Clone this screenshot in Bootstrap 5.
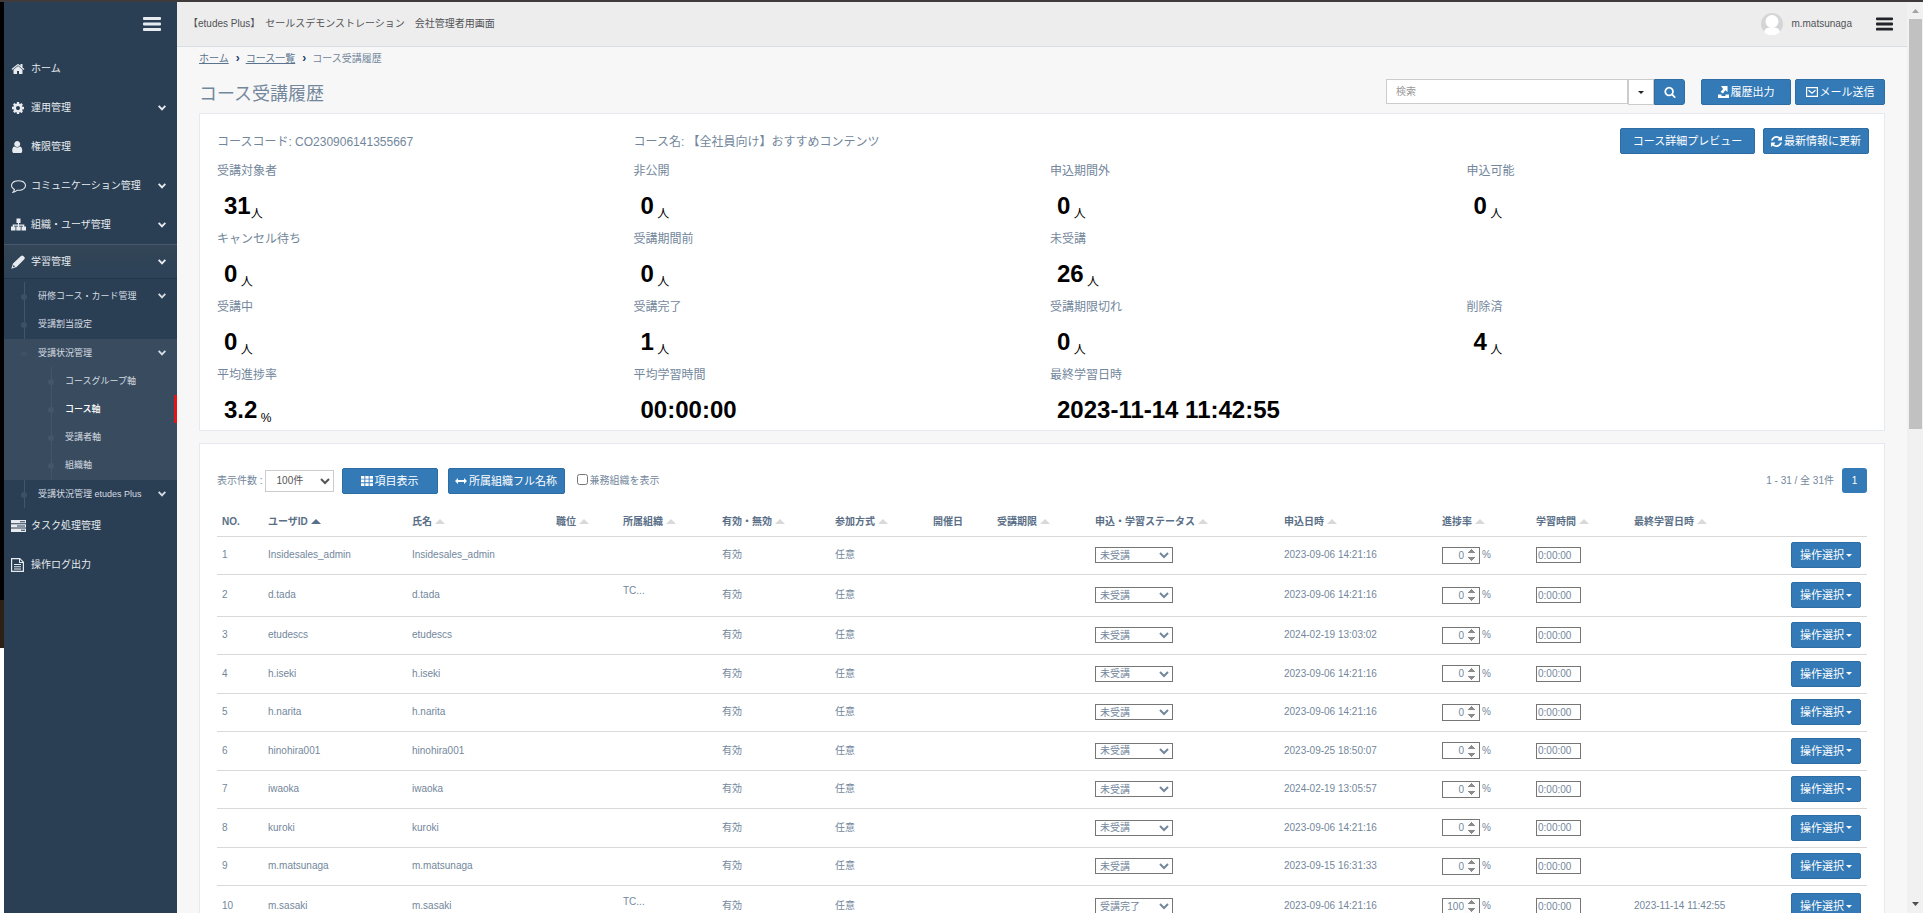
<!DOCTYPE html>
<html lang="ja">
<head>
<meta charset="utf-8">
<meta name="viewport" content="width=device-width, initial-scale=1">
<title>コース受講履歴</title>
<link href="https://cdn.jsdelivr.net/npm/bootstrap@5.3.0/dist/css/bootstrap.min.css" rel="stylesheet">
<style>
body{font-family:"Liberation Sans","Noto Sans CJK JP",sans-serif;font-size:10px;line-height:16px;color:#73879c;background:#f7f7f7;border-top:2px solid #3f3b3c}
svg{fill:currentColor;display:block;flex:none}
.edge{width:4px;background:#000}
.edge-brown{background:#2c1f16;margin-top:auto;height:48px}
.edge-rest{background:#fff;height:265px}
.sidebar{width:173px;background:#2a3f54;color:#e7ebef}
.sidebar a,.sidebar button{color:inherit;text-decoration:none}
.side-top{height:47px;padding:0 16px 0 0}
.side-item{height:39px;padding:0 11px 0 7px}
.side-item .ico{width:20px}
.side-item.active{height:33px;margin-top:1px;background:linear-gradient(#334556,#2c4257);box-shadow:0 -1px #47596b,0 1px #223548}
.sub{padding-top:4px;margin-bottom:-2px;font-size:9px;color:#d5dbe1;position:relative}
.sub::before,.sub2::before{content:"";position:absolute;width:1px;background:#425668;left:20px;top:4px;bottom:0}
.sub2::before{left:47px;top:28px;bottom:1px}
.sub-item{height:28px;padding:0 11px 0 34px;position:relative}
.sub-item::before{content:"";position:absolute;left:17px;top:12px;width:6px;height:6px;border-radius:50%;background:#3d5165}
.sub2{background:#394c5f;margin-top:1px;padding-bottom:1px;position:relative}
.sub2 .deep{padding-left:61px}
.sub2 .deep::before{left:44px;background:#43566a}
.sub2 .current{color:#fff;font-weight:500;border-right:3px solid #e11515}
.topbar{height:45px;background:#ededed;border-bottom:1px solid #d9dee4;color:#515356;padding:0 14px 0 11px}
.avatar{width:22px;height:22px}
.scrollcol{width:16px;background:#f1f1f1;padding:0 1px 0 2px}
.scrollcol .thumb{background:#c1c1c1;height:45%}
.content{padding:4px 22px 0 22px}
.crumbs a{color:#5a738e;text-decoration:underline}
.crumbs b{color:#1c3f6b;font-size:12px;line-height:14px;padding:0 6px 0 7px}
h1{font-size:18px;line-height:22px;margin:0;padding-top:4px;color:#73879c;font-weight:400}
.btn-main{--bs-btn-bg:#337ab7;--bs-btn-border-color:#2e6da4;--bs-btn-color:#fff;--bs-btn-hover-bg:#286090;--bs-btn-hover-color:#fff;--bs-btn-font-size:11px;--bs-btn-line-height:16px;--bs-btn-padding-y:4px;--bs-btn-padding-x:8px;--bs-btn-border-radius:2px;display:inline-flex;align-items:center;justify-content:center;gap:2px;white-space:nowrap}
.search-box{width:299px}
.search-box input{height:25px;border:1px solid #ccc;border-radius:0;font-size:10px;padding:0 9px;color:#555}
.search-box input::placeholder{color:#999}
.search-box .drop{width:26px;height:26px;background:#fff;border:1px solid #ccc;border-radius:0;padding:0}
.search-box .btn-main{width:31px;padding:0;height:26px;border-radius:0 3px 3px 0}
.caret{width:0;height:0;border:3px solid transparent;border-top-color:currentColor;border-bottom:0}
.w-action{width:90px}.w-preview{width:135px}.w-refresh{width:106px}.w-cols{width:96px}.w-full{width:117px}
.panel{background:#fff;border:1px solid #e6e9ed}
.summary{padding:14px 17px 0;font-size:12px}
.summary .row{--bs-gutter-x:16px}
.course-line{height:33px}
.course-text{padding-top:6px}
.course-tools{padding-right:6px}
.stat{height:68px}
.stat.closing{height:65px}
.stat dt{font-weight:400;line-height:20px;margin:0}
.stat dd{margin:0;padding:8px 0 0 7px;color:#000;line-height:34px}
.stat dd b{font-size:24px}
.stat sub{font-size:12px;bottom:-4px}
.list-panel{margin-top:12px;padding:23px 17px 0}
.tools{height:27px}
.tools select{width:69px;height:22px;margin:0 8px 0 2px;border:1px solid #ccc;background:#fff;color:#555;font-size:10px;padding:0 7px}
.tools .w-full{margin:0 8px 0 10px}
.tools input[type=checkbox]{width:11px;height:11px;margin:0 2px 2px 0}
.page-no{width:25px;height:25px;background:#337ab7;color:#fff;border-radius:3px;text-decoration:none}
.grid{table-layout:fixed;width:100%;margin-top:14px}
.grid th,.grid td{padding:0 5px;border-bottom:1px solid #d9d9d9;white-space:nowrap;vertical-align:middle}
.grid th{height:28px;color:#5a6f87}
.grid th a{color:inherit;text-decoration:none}
.grid th a::after{content:"";display:inline-block;border:5px solid transparent;border-top:0;border-bottom:5px solid #d9d9d9;margin-left:3px;vertical-align:1px}
.grid th a.asc::after{border-bottom-color:#5a6f87}
.grid tbody td{height:38px}
.grid tbody tr:nth-child(even) td{height:39px}
.grid tbody tr.tall td{height:42px}
.grid select,.grid input{border:1px solid #767676;border-radius:0;background:#fff;color:#73879c;font-size:10px;line-height:13px;display:block}
.grid select{width:78px;height:16px;padding:0}
.grid .rate{width:38px;height:17px;padding:0;text-align:right}
.grid .rate::-webkit-inner-spin-button{opacity:1;height:14px}
.grid .rate-cell{gap:2px}
.grid .time{width:45px;height:16px;padding:0 1px}
.grid .btn-main{width:70px}
</style>
</head>
<body class="vh-100 overflow-hidden">
<svg class="d-none">
<symbol id="chev" viewBox="0 0 8 6"><path d="M0 1.600 1.300.3 4 3l2.700-2.700L8 1.600 4 5.700z"/></symbol>
<symbol id="bars" viewBox="0 0 18 14"><path d="M1 0h16a1 1 0 0 1 1 1v1a1 1 0 0 1-1 1H1a1 1 0 0 1-1-1V1a1 1 0 0 1 1-1zM1 5.500h16a1 1 0 0 1 1 1v1a1 1 0 0 1-1 1H1a1 1 0 0 1-1-1v-1a1 1 0 0 1 1-1zM1 11h16a1 1 0 0 1 1 1v1a1 1 0 0 1-1 1H1a1 1 0 0 1-1-1v-1a1 1 0 0 1 1-1z"/></symbol>
</svg>
<div class="d-flex h-100">
  <div class="edge d-flex flex-column flex-shrink-0"><div class="edge-brown"></div><div class="edge-rest"></div></div>
  <nav class="sidebar flex-shrink-0" aria-label="メインメニュー">
    <div class="side-top d-flex align-items-center justify-content-end"><button class="btn p-0 pb-2 border-0" aria-label="メニュー"><svg class="mt-1" width="18" height="14"><use href="#bars"/></svg></button></div>
    <a href="#" class="side-item d-flex align-items-center"><span class="ico"><svg width="14" height="14" viewBox="0 0 1792 1792"><path d="M1472 992v480q0 26-19 45t-45 19h-384v-384h-256v384h-384q-26 0-45-19t-19-45v-480q0-1 .5-3t.5-3l575-474 575 474q1 2 1 6zm223-69l-62 74q-8 9-21 11h-3q-13 0-21-7l-692-577-692 577q-12 8-24 7-13-2-21-11l-62-74q-8-10-7-23.500t11-21.500l719-599q32-26 76-26t76 26l244 204v-195q0-14 9-23t23-9h192q14 0 23 9t9 23v408l219 182q10 8 11 21.500t-7 23.500z"/></svg></span>ホーム</a>
    <a href="#" class="side-item d-flex align-items-center"><span class="ico"><svg width="14" height="14" viewBox="0 0 1792 1792"><path d="M1152 896q0-106-75-181t-181-75-181 75-75 181 75 181 181 75 181-75 75-181zm512-109v222q0 12-8 23t-20 13l-185 28q-19 54-39 91 35 50 107 138 10 12 10 25t-9 23q-27 37-99 108t-94 71q-12 0-26-9l-138-108q-44 23-91 38-16 136-29 186-7 28-36 28h-222q-14 0-24.500-8.500t-11.500-21.500l-28-184q-49-16-90-37l-141 107q-10 9-25 9-14 0-25-11-126-114-165-168-7-10-7-23 0-12 8-23 15-21 51-66.500t54-70.500q-27-50-41-99l-183-27q-13-2-21-12.500t-8-23.500v-222q0-12 8-23t19-13l186-28q14-46 39-92-40-57-107-138-10-12-10-24 0-10 9-23 26-36 98.500-107.500t94.500-71.500q13 0 26 10l138 107q44-23 91-38 16-136 29-186 7-28 36-28h222q14 0 24.500 8.500t11.500 21.500l28 184q49 16 90 37l142-107q9-9 24-9 13 0 25 10 129 119 165 170 7 8 7 22 0 12-8 23-15 21-51 66.500t-54 70.500q26 50 41 98l183 28q13 2 21 12.500t8 23.500z"/></svg></span>運用管理<svg class="ms-auto" width="8" height="6"><use href="#chev"/></svg></a>
    <a href="#" class="side-item d-flex align-items-center"><span class="ico"><svg width="14" height="14" viewBox="100 0 1792 1792"><path d="M1536 1399q0 109-62.500 187t-150.500 78h-854q-88 0-150.500-78t-62.500-187q0-85 8.500-160.500t31.500-152 58.500-131 94-89 134.500-34.500q131 128 313 128t313-128q76 0 134.500 34.500t94 89 58.500 131 31.500 152 8.500 160.500zm-256-887q0 159-112.500 271.500t-271.500 112.500-271.500-112.500-112.500-271.500 112.500-271.500 271.500-112.500 271.500 112.500 112.500 271.500z"/></svg></span>権限管理</a>
    <a href="#" class="side-item d-flex align-items-center"><span class="ico"><svg width="15" height="15" viewBox="0 0 1792 1792"><path d="M896 384q-204 0-381.500 69.500t-282 187.500-104.500 255q0 112 71.500 213.500t201.500 175.500l87 50-27 96q-24 91-70 172 152-63 275-171l43-38 57 6q69 8 130 8 204 0 381.500-69.500t282-187.500 104.500-255-104.500-255-282-187.500-381.500-69.500zm896 512q0 174-120 321.500t-326 233-450 85.500q-70 0-145-8-198 175-460 242-49 14-114 22h-5q-15 0-27-10.500t-16-27.500v-1q-3-4-.5-12t2-10 4.500-9.500l6-9 7-8.500 8-9q7-8 31-34.500t34.500-38 31-39.500 32.500-51 27-59 26-76q-157-89-247.500-220t-90.500-281q0-174 120-321.500t326-233 450-85.500 450 85.500 326 233 120 321.500z"/></svg></span>コミュニケーション管理<svg class="ms-auto" width="8" height="6"><use href="#chev"/></svg></a>
    <a href="#" class="side-item d-flex align-items-center"><span class="ico"><svg width="15" height="13" viewBox="0 0 15 13"><path d="M5.500 0.500h4v4.500H8v1.500h5.300V8.500h1.700v4h-4.500v-4H12V7.700H8v.8h1.700v4H5.300v-4H7v-.8H3v.8h1.500v4H0v-4h1.700v-2H7V5H5.500z"/></svg></span>組織・ユーザ管理<svg class="ms-auto" width="8" height="6"><use href="#chev"/></svg></a>
    <a href="#" class="side-item active d-flex align-items-center"><span class="ico"><svg width="15" height="14" viewBox="0 0 15 14"><path fill-rule="evenodd" d="M10 .9q1.200-1 2.300 0l1 1q1 1.100 0 2.300L5.600 12 .3 13.700 2 8.400zM2.600 10l-.8 2.200 2.300-.7z"/></svg></span>学習管理<svg class="ms-auto" width="8" height="6"><use href="#chev"/></svg></a>
    <div class="sub">
      <a href="#" class="sub-item d-flex align-items-center">研修コース・カード管理<svg class="ms-auto" width="8" height="6"><use href="#chev"/></svg></a>
      <a href="#" class="sub-item d-flex align-items-center">受講割当設定</a>
      <div class="sub2">
        <a href="#" class="sub-item d-flex align-items-center">受講状況管理<svg class="ms-auto" width="8" height="6"><use href="#chev"/></svg></a>
        <a href="#" class="sub-item deep d-flex align-items-center">コースグループ軸</a>
        <a href="#" class="sub-item deep current d-flex align-items-center">コース軸</a>
        <a href="#" class="sub-item deep d-flex align-items-center">受講者軸</a>
        <a href="#" class="sub-item deep d-flex align-items-center">組織軸</a>
      </div>
      <a href="#" class="sub-item d-flex align-items-center">受講状況管理 etudes Plus<svg class="ms-auto" width="8" height="6"><use href="#chev"/></svg></a>
    </div>
    <a href="#" class="side-item d-flex align-items-center"><span class="ico"><svg width="15" height="12" viewBox="0 0 15 12"><path fill-rule="evenodd" d="M0 0h15v3.300H0zM9 1.200v1h5v-1zM0 4.300h15v3.300H0zM6 5.500v1h8v-1zM0 8.600h15v3.300H0zM10 9.800v1h4v-1z"/></svg></span>タスク処理管理</a>
    <a href="#" class="side-item d-flex align-items-center"><span class="ico"><svg width="13" height="14" viewBox="0 0 13 14"><path fill-rule="evenodd" d="M1 0h8l4 4v10H0V0zM1.200 1.200v11.600h10.600V5H8V1.200zM9 1.600V4h2.400zM3 6h7v1H3zM3 8.200h7v1H3zM3 10.400h7v1H3z"/></svg></span>操作ログ出力</a>
  </nav>
  <div class="flex-grow-1 overflow-hidden">
    <header class="topbar d-flex align-items-center">
      <span>【etudes Plus】　セールスデモンストレーション　会社管理者用画面</span>
      <a href="#" class="ms-auto d-flex align-items-center gap-2 text-reset text-decoration-none"><svg class="avatar" viewBox="0 0 22 22"><circle cx="11" cy="11" r="11" fill="#d5d5d5"/><path d="M3 19c1-4 4-4.500 8-4.500s7 .5 8 4.500a11 11 0 0 1-16 0z" fill="#fff"/><circle cx="11" cy="8.500" r="6.500" fill="#fff"/></svg>m.matsunaga</a>
      <button class="btn p-0 border-0 ms-4" aria-label="設定"><svg width="17" height="14" fill="#444"><use href="#bars"/></svg></button>
    </header>
    <main class="content">
      <nav class="crumbs" aria-label="パンくず"><a href="#">ホーム</a><b>›</b><a href="#">コース一覧</a><b>›</b><span>コース受講履歴</span></nav>
      <div class="d-flex align-items-center mt-2 pt-1 pb-2">
        <h1>コース受講履歴</h1>
        <div class="search-box d-flex ms-auto">
          <input class="form-control" type="text" placeholder="検索" aria-label="検索">
          <button class="btn drop d-flex align-items-center justify-content-center flex-shrink-0" aria-label="検索条件"><span class="caret"></span></button>
          <button class="btn btn-main flex-shrink-0" aria-label="検索する"><svg width="12" height="12" viewBox="0 0 1792 1792"><path d="M1216 832q0-185-131.500-316.500t-316.500-131.500-316.500 131.500-131.500 316.500 131.500 316.500 316.500 131.500 316.500-131.500 131.500-316.500zm512 832q0 52-38 90t-90 38q-54 0-90-38l-343-342q-179 124-399 124-143 0-273.500-55.500t-225-150-150-225-55.500-273.500 55.500-273.500 150-225 225-150 273.500-55.500 273.500 55.500 225 150 150 225 55.500 273.500q0 220-124 399l343 343q37 37 37 90z"/></svg></button>
        </div>
        <button class="btn btn-main w-action ms-3"><svg width="11" height="12" viewBox="0 0 11 12"><path d="M0 8.500h3.500V10h4V8.500H11V12H0zM3 0h6.500v6L7.300 4.200 5 7.500 2.500 6l2.600-3z"/></svg>履歴出力</button>
        <button class="btn btn-main w-action ms-1"><svg width="12" height="10" viewBox="0 0 12 10"><path d="M.6.6h10.800v8.800H.6zM2.500 3.200l3.500 3 3.500-3" fill="none" stroke="currentColor" stroke-width="1.200"/></svg>メール送信</button>
      </div>
      <section class="panel summary">
        <div class="row course-line">
          <div class="col-3 course-text">コースコード: CO230906141355667</div>
          <div class="col-5 course-text">コース名: 【全社員向け】おすすめコンテンツ</div>
          <div class="col-4 course-tools d-flex justify-content-end align-items-start gap-2">
            <button class="btn btn-main w-preview">コース詳細プレビュー</button>
            <button class="btn btn-main w-refresh"><svg width="11" height="11" viewBox="128 128 1536 1536"><path d="M1639 1056q0 5-1 7-64 268-268 434.500t-478 166.500q-146 0-282.500-55t-243.500-157l-129 129q-19 19-45 19t-45-19-19-45v-448q0-26 19-45t45-19h448q26 0 45 19t19 45-19 45l-137 137q71 66 161 102t187 36q134 0 250-65t186-179q11-17 53-117 8-23 30-23h192q13 0 22.500 9.500t9.500 22.500zm25-800v448q0 26-19 45t-45 19h-448q-26 0-45-19t-19-45 19-45l138-138q-148-137-349-137-134 0-250 65t-186 179q-11 17-53 117-8 23-30 23h-199q-13 0-22.500-9.500t-9.500-22.500v-7q65-268 270-434.500t480-166.500q146 0 284 55.500t245 156.500l130-129q19-19 45-19t45 19 19 45z"/></svg>最新情報に更新</button>
          </div>
        </div>
        <div class="row">
          <dl class="col-3 stat mb-0"><dt>受講対象者</dt><dd><b>31</b><sub>人</sub></dd></dl>
          <dl class="col-3 stat mb-0"><dt>非公開</dt><dd><b>0</b> <sub>人</sub></dd></dl>
          <dl class="col-3 stat mb-0"><dt>申込期間外</dt><dd><b>0</b> <sub>人</sub></dd></dl>
          <dl class="col-3 stat mb-0"><dt>申込可能</dt><dd><b>0</b> <sub>人</sub></dd></dl>
          <dl class="col-3 stat mb-0"><dt>キャンセル待ち</dt><dd><b>0</b> <sub>人</sub></dd></dl>
          <dl class="col-3 stat mb-0"><dt>受講期間前</dt><dd><b>0</b> <sub>人</sub></dd></dl>
          <dl class="col-6 stat mb-0"><dt>未受講</dt><dd><b>26</b> <sub>人</sub></dd></dl>
          <dl class="col-3 stat mb-0"><dt>受講中</dt><dd><b>0</b> <sub>人</sub></dd></dl>
          <dl class="col-3 stat mb-0"><dt>受講完了</dt><dd><b>1</b> <sub>人</sub></dd></dl>
          <dl class="col-3 stat mb-0"><dt>受講期限切れ</dt><dd><b>0</b> <sub>人</sub></dd></dl>
          <dl class="col-3 stat mb-0"><dt>削除済</dt><dd><b>4</b> <sub>人</sub></dd></dl>
          <dl class="col-3 stat closing mb-0"><dt>平均進捗率</dt><dd><b>3.2</b> <sub>%</sub></dd></dl>
          <dl class="col-3 stat closing mb-0"><dt>平均学習時間</dt><dd><b>00:00:00</b></dd></dl>
          <dl class="col-6 stat closing mb-0"><dt>最終学習日時</dt><dd><b>2023-11-14 11:42:55</b></dd></dl>
        </div>
      </section>
      <section class="panel list-panel">
        <div class="tools d-flex align-items-center">
          <label for="per">表示件数 :</label>
          <select id="per"><option>100件</option></select>
          <button class="btn btn-main w-cols"><svg width="12" height="10" viewBox="0 0 12 10"><path d="M0 0h3.400v2.700H0zM4.300 0h3.400v2.700H4.300zM8.600 0H12v2.700H8.600zM0 3.600h3.400v2.700H0zM4.300 3.600h3.400v2.700H4.300zM8.600 3.600H12v2.700H8.600zM0 7.200h3.400v2.700H0zM4.300 7.200h3.400v2.700H4.300zM8.600 7.200H12v2.700H8.600z"/></svg>項目表示</button>
          <button class="btn btn-main w-full"><svg width="12" height="6" viewBox="0 0 12 6"><path d="M3 0v2h6V0l3 3-3 3V4H3v2L0 3z"/></svg>所属組織フル名称</button>
          <input type="checkbox" id="dual" class="ms-1"><label for="dual">兼務組織を表示</label>
          <span class="ms-auto me-2">1 - 31 / 全 31件</span>
          <a href="#" class="page-no d-flex align-items-center justify-content-center">1</a>
        </div>
        <table class="grid">
          <colgroup><col style="width:46px"><col style="width:144px"><col style="width:144px"><col style="width:67px"><col style="width:99px"><col style="width:113px"><col style="width:98px"><col style="width:64px"><col style="width:98px"><col style="width:189px"><col style="width:158px"><col style="width:94px"><col style="width:98px"><col style="width:157px"><col style="width:81px"></colgroup>
          <thead><tr><th>NO.</th><th><a href="#" class="asc">ユーザID</a></th><th><a href="#">氏名</a></th><th><a href="#">職位</a></th><th><a href="#">所属組織</a></th><th><a href="#">有効・無効</a></th><th><a href="#">参加方式</a></th><th>開催日</th><th><a href="#">受講期限</a></th><th><a href="#">申込・学習ステータス</a></th><th><a href="#">申込日時</a></th><th><a href="#">進捗率</a></th><th><a href="#">学習時間</a></th><th><a href="#">最終学習日時</a></th><th></th></tr></thead>
          <tbody id="rows"></tbody>
        </table>
      </section>
    </main>
  </div>
  <div class="scrollcol d-flex flex-column flex-shrink-0" aria-hidden="true">
    <svg class="my-1 mx-auto" width="7" height="9" viewBox="0 0 7 9"><path d="M0 7l3.500-4L7 7z" fill="#a3a3a3"/></svg>
    <div class="thumb"></div>
    <svg class="mt-auto mb-1 mx-auto" width="7" height="9" viewBox="0 0 7 9"><path d="M0 2l3.500 4L7 2z" fill="#505050"/></svg>
  </div>
</div>
<script src="https://cdn.jsdelivr.net/npm/bootstrap@5.3.0/dist/js/bootstrap.bundle.min.js"></script>
<script>
const users=[
 ['Insidesales_admin','2023-09-06 14:21:16'],
 ['d.tada','2023-09-06 14:21:16','TC...'],
 ['etudescs','2024-02-19 13:03:02'],
 ['h.iseki','2023-09-06 14:21:16'],
 ['h.narita','2023-09-06 14:21:16'],
 ['hinohira001','2023-09-25 18:50:07'],
 ['iwaoka','2024-02-19 13:05:57'],
 ['kuroki','2023-09-06 14:21:16'],
 ['m.matsunaga','2023-09-15 16:31:33'],
 ['m.sasaki','2023-09-06 14:21:16','TC...','受講完了',100,'2023-11-14 11:42:55']
];
document.getElementById('rows').innerHTML=users.map(([id,date,org,status='未受講',rate=0,last=''],i)=>`
<tr class="${org?'tall':''}"><td>${i+1}</td><td>${id}</td><td>${id}</td><td></td><td>${org?`<p class="mb-2">${org}</p>`:''}</td><td>有効</td><td>任意</td><td></td><td></td>
<td><select aria-label="ステータス"><option>${status}</option></select></td><td>${date}</td>
<td><div class="rate-cell d-flex align-items-center"><input class="rate" type="number" value="${rate}" aria-label="進捗率">%</div></td>
<td><input class="time" type="text" value="0:00:00" aria-label="学習時間"></td><td>${last}</td>
<td><button class="btn btn-main">操作選択<span class="caret"></span></button></td></tr>`).join('');
</script>
</body>
</html>
